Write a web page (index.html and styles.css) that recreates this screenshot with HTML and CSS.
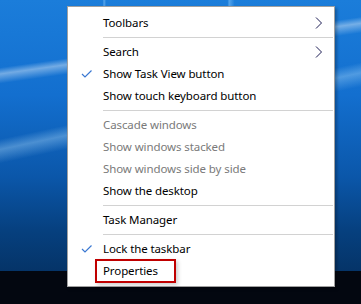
FILE: index.html
```html
<!DOCTYPE html>
<html lang="en">
<head>
    <meta charset="UTF-8">
    <meta name="viewport" content="width=device-width, initial-scale=1.0">
    <title>Taskbar menu</title>
    <link rel="stylesheet" href="styles.css">
</head>
<body>
    <div class="desktop">
        <div class="wallpaper"></div>
        <div class="taskbar"></div>

        <div class="context-menu">
            <div class="item">Toolbars
                <svg class="arrow" width="8" height="12" viewBox="0 0 8 12"><path d="M1 0.5 L6.5 6 L1 11.5" /></svg>
            </div>
            <div class="sep"></div>
            <div class="item">Search
                <svg class="arrow" width="8" height="12" viewBox="0 0 8 12"><path d="M1 0.5 L6.5 6 L1 11.5" /></svg>
            </div>
            <div class="item checked">
                <svg class="check" width="12" height="10" viewBox="0 0 12 10"><path d="M1 5 L4 8 L10.5 1.5" /></svg>
                Show Task View button
            </div>
            <div class="item">Show touch keyboard button</div>
            <div class="sep"></div>
            <div class="item disabled">Cascade windows</div>
            <div class="item disabled">Show windows stacked</div>
            <div class="item disabled">Show windows side by side</div>
            <div class="item">Show the desktop</div>
            <div class="sep"></div>
            <div class="item">Task Manager</div>
            <div class="sep"></div>
            <div class="item checked">
                <svg class="check" width="12" height="10" viewBox="0 0 12 10"><path d="M1 5 L4 8 L10.5 1.5" /></svg>
                Lock the taskbar
            </div>
            <div class="item"><span class="highlight">Properties</span></div>
        </div>
    </div>
</body>
</html>
```

FILE: styles.css
```css
body { margin: 0; padding: 0; font-family: "Noto Sans", "Open Sans", sans-serif; font-size: 11.5px; letter-spacing: -0.1px; background: #030710; }
.desktop { position: relative; width: 361px; height: 304px; overflow: hidden; display: flex; flex-direction: column; }
.wallpaper { height: 271px; background:
    linear-gradient(172deg, transparent 21%, rgba(255, 255, 255, 0.4) 23%, transparent 26%),
    linear-gradient(168deg, transparent 40%, rgba(190, 230, 255, 0.35) 43%, transparent 47%),
    linear-gradient(to right, transparent 28.5%, rgba(150, 210, 255, 0.5) 28.8%, transparent 29.4%, transparent 63%, rgba(150, 210, 255, 0.45) 63.5%, transparent 65%),
    linear-gradient(to bottom, #1b7dda 0%, #136fcf 35%, #0b57aa 65%, #06407f 85%, #053468 100%); }
.taskbar { flex: 1; background: #030710; }

.context-menu { position: absolute; left: 67px; top: 6px; width: 266px; padding: 5px 0 4px; background: #fff; border: 1px solid #a0a0a0; box-shadow: 2px 2px 3px rgba(0, 0, 0, 0.3); }
.item { position: relative; height: 22px; line-height: 22px; padding-left: 35px; color: #000; white-space: nowrap; }
.item.disabled { color: #7a7a7a; }
.sep { height: 1px; margin: 3px 1px 3px 35px; background: #d2d2d2; }

.arrow { position: absolute; right: 11px; top: 5px; }
.arrow path { fill: none; stroke: #1c1c55; stroke-width: 1; }
.check { position: absolute; left: 13px; top: 6px; }
.check path { fill: none; stroke: #3a78d2; stroke-width: 1.2; }

.highlight { display: inline-block; height: 20px; line-height: 20px; margin: 0 0 0 -8px; padding: 0 16px 0 6px; border: 2px solid #c00000; position: relative; top: -1px; box-shadow: 2px 2px 4px rgba(0, 0, 0, 0.2); }
```
